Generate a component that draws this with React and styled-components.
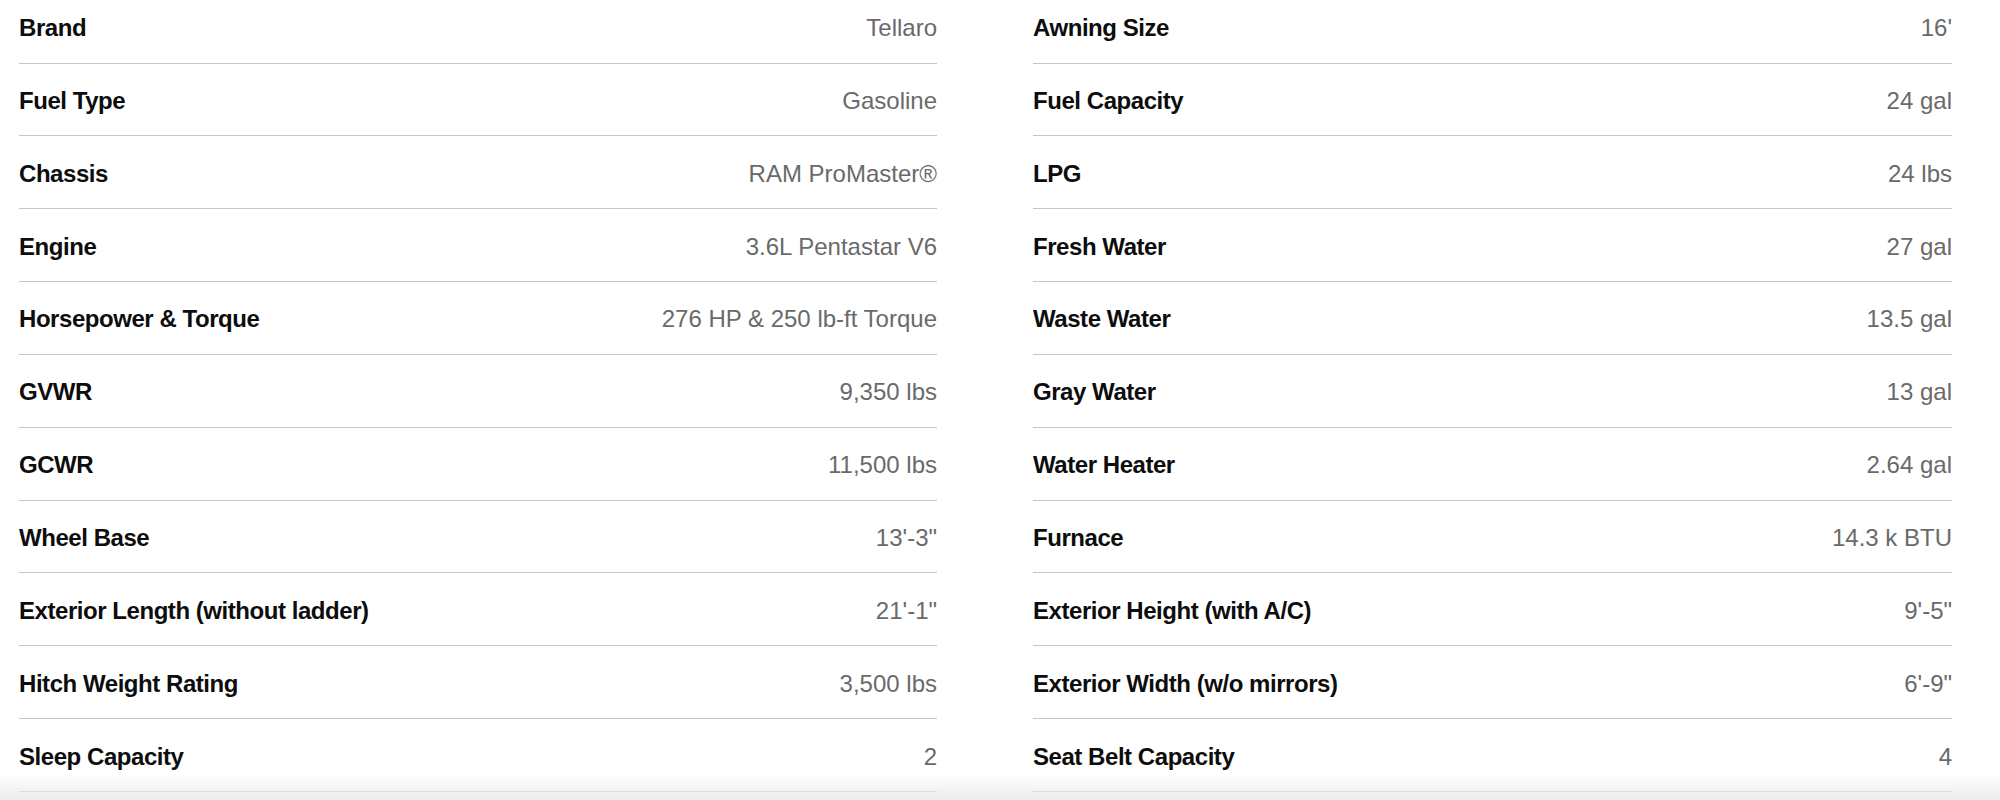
import styled, { createGlobalStyle } from 'styled-components'

const leftSpecs = [
   ['Brand', 'Tellaro'],
   ['Fuel Type', 'Gasoline'],
   ['Chassis', 'RAM ProMaster®'],
   ['Engine', '3.6L Pentastar V6'],
   ['Horsepower & Torque', '276 HP & 250 lb-ft Torque'],
   ['GVWR', '9,350 lbs'],
   ['GCWR', '11,500 lbs'],
   ['Wheel Base', `13'-3"`],
   ['Exterior Length (without ladder)', `21'-1"`],
   ['Hitch Weight Rating', '3,500 lbs'],
   ['Sleep Capacity', '2'],
]

const rightSpecs = [
   ['Awning Size', `16'`],
   ['Fuel Capacity', '24 gal'],
   ['LPG', '24 lbs'],
   ['Fresh Water', '27 gal'],
   ['Waste Water', '13.5 gal'],
   ['Gray Water', '13 gal'],
   ['Water Heater', '2.64 gal'],
   ['Furnace', '14.3 k BTU'],
   ['Exterior Height (with A/C)', `9'-5"`],
   ['Exterior Width (w/o mirrors)', `6'-9"`],
   ['Seat Belt Capacity', '4'],
]

const SpecColumn = ({ specs }) => (
   <Column>
      {specs.map(([label, value]) => (
         <Row key={label}>
            <Label>{label}</Label>
            <Value>{value}</Value>
         </Row>
      ))}
   </Column>
)

const App = () => {
   return (
      <>
         <GlobalStyle />
         <Page>
            <Specs>
               <SpecColumn specs={leftSpecs} />
               <SpecColumn specs={rightSpecs} />
            </Specs>
            <BottomFade />
         </Page>
      </>
   )
}

const GlobalStyle = createGlobalStyle`
   html, body {
      margin: 0;
      padding: 0;
      background: #fff;
   }
   body {
      font-family: "Liberation Sans", Arial, sans-serif;
      -webkit-font-smoothing: antialiased;
   }
`

const Page = styled.div`
   position: relative;
   width: 2000px;
   height: 800px;
   overflow: hidden;
`

const Specs = styled.div`
   display: grid;
   grid-template-columns: 918px 919px;
   column-gap: 96px;
   padding-left: 19px;
   margin-top: -9.35px;
`

const Column = styled.div`
   display: flex;
   flex-direction: column;
`

const Row = styled.div`
   display: flex;
   justify-content: space-between;
   align-items: center;
   box-sizing: border-box;
   height: 72.85px;
   padding-top: 3px;
   border-bottom: 1.5px solid #c6c6c6;
   font-size: 24px;
   line-height: 26px;
`

const Label = styled.span`
   color: #0d0d0d;
   font-weight: 700;
   letter-spacing: -0.45px;
`

const Value = styled.span`
   color: #6a6a6a;
   font-weight: 400;
`

const BottomFade = styled.div`
   position: absolute;
   left: 0;
   right: 0;
   bottom: 0;
   height: 26px;
   pointer-events: none;
   background: linear-gradient(to bottom, rgba(234, 234, 234, 0), rgba(234, 234, 234, 0.95));
`

export default App
